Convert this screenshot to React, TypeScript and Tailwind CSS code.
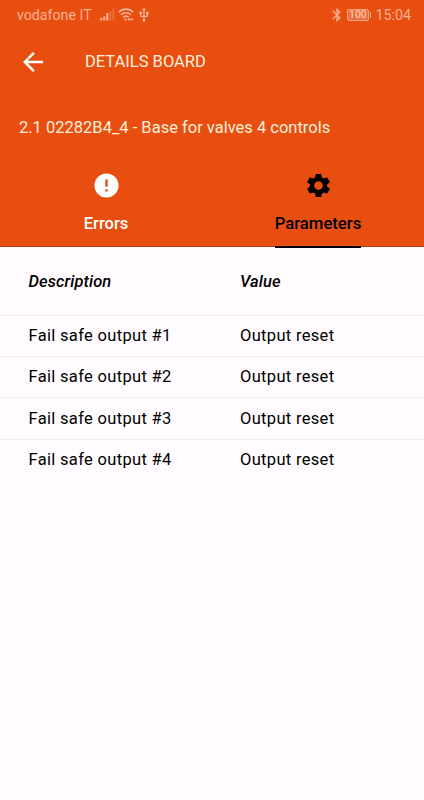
import React from "react";
import {
  MdArrowBack,
  MdBluetooth,
  MdError,
  MdSettings,
  MdUsb,
} from "react-icons/md";

const rows = [
  { description: "Fail safe output #1", value: "Output reset" },
  { description: "Fail safe output #2", value: "Output reset" },
  { description: "Fail safe output #3", value: "Output reset" },
  { description: "Fail safe output #4", value: "Output reset" },
];

function SignalIcon() {
  return (
    <svg width="15" height="13" viewBox="0 0 15 13" fill="currentColor">
      <rect x="0.2" y="10" width="2" height="2.5" />
      <rect x="3.2" y="8.5" width="2" height="4" />
      <rect x="6.2" y="5" width="2.2" height="7.5" />
      <rect x="9.5" y="3" width="1.8" height="9.5" opacity="0.35" />
      <rect x="12.5" y="0.5" width="1.8" height="12" opacity="0.35" />
    </svg>
  );
}

function WifiIcon() {
  return (
    <svg
      width="16"
      height="13"
      viewBox="0 0 16 13"
      fill="none"
      stroke="currentColor"
      strokeWidth="1.6"
    >
      <path d="M.8 4.2C4.8.1 11.2.1 15.2 4.2" />
      <path d="M3 6.8c2.8-2.8 7.2-2.8 10 0" />
      <path d="M5.3 9.2c1.5-1.5 3.9-1.5 5.4 0" />
      <circle cx="7.4" cy="11.6" r="1.1" fill="currentColor" stroke="none" />
      <path
        d="M9.3 11.3l2-1.6v3.2zM15.5 11.3l-2-1.6v3.2zM11 10.7h3v1.2h-3z"
        fill="currentColor"
        stroke="none"
      />
    </svg>
  );
}

function Battery() {
  return (
    <div className="flex items-center gap-px">
      <div className="flex h-3 w-[22px] items-center justify-center rounded-[2px] border border-[#f5a583] bg-[#ec6f3c] text-[10.5px] font-medium leading-none text-[#fbc4aa]">
        100
      </div>
      <div className="h-[6px] w-[1.5px] bg-current" />
    </div>
  );
}

function StatusBar() {
  return (
    <div className="flex h-[30px] items-center justify-between pl-[17px] pr-[13px] text-[#f8b294]">
      <div className="flex items-center">
        <span className="w-[83px] pt-px text-[14.2px]">vodafone IT</span>
        <SignalIcon />
        <div className="ml-[3px]">
          <WifiIcon />
        </div>
        <MdUsb className="ml-[2px] size-[16px]" />
      </div>
      <div className="flex items-center">
        <MdBluetooth className="mr-[2px] size-[16px]" />
        <Battery />
        <span className="ml-[4px] pt-px text-[14.3px]">15:04</span>
      </div>
    </div>
  );
}

export default function App() {
  return (
    <div className="flex h-[800px] w-[424px] flex-col overflow-hidden bg-[#fffbff] font-[Roboto,sans-serif] text-black">
      <header className="h-[247px] shrink-0 border-b border-[#a8400f] bg-[#e84e0f]">
        <StatusBar />
        <div className="flex h-[64px] items-center pl-[18px] text-[#fff0dc]">
          <MdArrowBack className="size-[30px] text-white" />
          <h1 className="ml-[37px] text-[16.5px]">DETAILS BOARD</h1>
        </div>
        <div className="flex h-[68px] items-center pl-[19px] text-[16.5px] text-[#fff0dc]">
          2.1 02282B4_4 - Base for valves 4 controls
        </div>
        <nav className="flex h-[86px] font-medium">
          <button className="flex w-1/2 flex-col items-center pt-[9px] text-white">
            <MdError className="size-[29px]" />
            <span className="mt-[12px] text-[16.5px] leading-[24px]">
              Errors
            </span>
          </button>
          <button className="flex w-1/2 flex-col items-center pt-[9px] text-black">
            <MdSettings className="size-[29px]" />
            <span className="mt-[12px] h-[36px] shrink-0 border-b-2 border-black text-[16.7px] leading-[24px]">
              Parameters
            </span>
          </button>
        </nav>
      </header>

      <main className="text-[16.5px]">
        <div className="grid h-[67.6px] grid-cols-2 items-center pt-[3px] font-medium italic">
          <span className="pl-[28.5px] tracking-[0.1px]">Description</span>
          <span className="pl-[28px] tracking-[0.1px]">Value</span>
        </div>
        {rows.map((row) => (
          <div
            key={row.description}
            className="grid h-[41.35px] grid-cols-2 items-center border-t border-[#f0ebef] pt-[1.5px] tracking-[0.32px]"
          >
            <span className="pl-[28.5px]">{row.description}</span>
            <span className="pl-[28px]">{row.value}</span>
          </div>
        ))}
      </main>
    </div>
  );
}
